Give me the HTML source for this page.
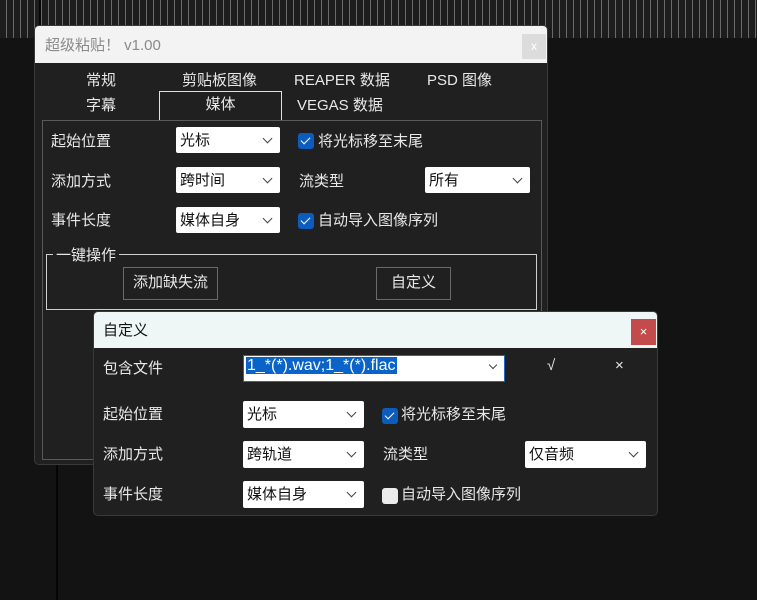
<!DOCTYPE html>
<html><head><meta charset="utf-8"><style>
*{box-sizing:border-box;margin:0;padding:0}
body{width:757px;height:600px;overflow:hidden;background:#131313;position:relative;font-family:"Liberation Sans","Noto Sans CJK SC",sans-serif;font-size:15px;color:#e8e8e8}
.a{position:absolute}
.top{left:0;top:0;width:757px;height:38px;background:#1d1d1d repeating-linear-gradient(90deg,transparent 0 6px,#6a6a6a 6px 7px)}
.vl{width:2px;background:#050505}
.win{left:34px;top:25px;width:514px;height:440px;background:#202020;border:1px solid #3a3a3a;border-radius:5px;overflow:hidden}
.tb{left:0;top:0;width:100%;height:37px;background:#f3f3f3;color:#8a8a8a;font-size:15px;padding:8px 10px}
.cb{background:#dcdcdc;color:#fff;font-size:12px;text-align:center;line-height:25px}
.t{font-size:15px;color:#e8e8e8;white-space:nowrap}
.sel{border:1px solid #e0e0e0;border-bottom:none;width:123px;height:29px;text-align:center;line-height:26px}
.panel{border:1px solid #5a5a5a}
.combo{background:#fff;color:#111;height:26px;padding:2px 4px;font-size:15px;border-radius:2px}
.combo:after{content:"";position:absolute;right:9px;top:8px;width:6px;height:6px;border-right:1px solid #444;border-bottom:1px solid #444;transform:rotate(45deg)}
.chk{width:16px;height:16px;background:#0b5cbd;border-radius:3px}
.chk:after{content:"";position:absolute;left:5px;top:2px;width:4px;height:8px;border-right:1.5px solid #fff;border-bottom:1.5px solid #fff;transform:rotate(45deg)}
.btn{border:1px solid #6a6a6a;text-align:center;line-height:30px}
.dlg{left:93px;top:311px;width:565px;height:205px;background:#202020;border:1px solid #3a3a3a;border-radius:5px;overflow:hidden}
</style></head><body>
<div class="a top"></div>
<div class="a vl" style="left:39px;top:0;height:38px"></div>
<div class="a vl" style="left:56px;top:38px;height:562px"></div>
<div class="a win">
 <div class="a tb">超级粘贴！ v1.00</div>
 <div class="a cb" style="left:487px;top:8px;width:24px;height:25px">x</div>
 <div class="a t" style="left:51px;top:43px">常规</div>
 <div class="a t" style="left:147px;top:43px">剪贴板图像</div>
 <div class="a t" style="left:259px;top:43px">REAPER 数据</div>
 <div class="a t" style="left:392px;top:43px">PSD 图像</div>
 <div class="a t" style="left:51px;top:68px">字幕</div>
 <div class="a t sel" style="left:124px;top:65px">媒体</div>
 <div class="a t" style="left:262px;top:68px">VEGAS 数据</div>
 <div class="a panel" style="left:7px;top:94px;width:500px;height:340px"></div>
 <div class="a t" style="left:16px;top:104px">起始位置</div>
 <div class="a combo" style="left:141px;top:101px;width:104px">光标</div>
 <div class="a chk" style="left:263px;top:107px"></div>
 <div class="a t" style="left:283px;top:104px">将光标移至末尾</div>
 <div class="a t" style="left:16px;top:144px">添加方式</div>
 <div class="a combo" style="left:141px;top:141px;width:104px">跨时间</div>
 <div class="a t" style="left:264px;top:144px">流类型</div>
 <div class="a combo" style="left:390px;top:141px;width:105px">所有</div>
 <div class="a t" style="left:16px;top:183px">事件长度</div>
 <div class="a combo" style="left:141px;top:181px;width:104px">媒体自身</div>
 <div class="a chk" style="left:263px;top:187px"></div>
 <div class="a t" style="left:283px;top:183px">自动导入图像序列</div>
 <div class="a" style="left:11px;top:228px;width:491px;height:56px;border:1px solid #cfcfcf"></div>
 <div class="a t" style="left:18px;top:218px;background:#202020;padding:0 3px">一键操作</div>
 <div class="a t btn" style="left:88px;top:241px;width:95px;height:33px">添加缺失流</div>
 <div class="a t btn" style="left:341px;top:241px;width:75px;height:33px">自定义</div>
</div>
<div class="a dlg">
 <div class="a" style="left:0;top:0;width:100%;height:36px;background:#eef6f6;color:#111;padding:7px 9px;font-size:15px">自定义</div>
 <div class="a" style="left:537px;top:7px;width:25px;height:26px;background:#c44b4b;color:#fff;text-align:center;line-height:25px;font-size:13px">×</div>
 <div class="a t" style="left:9px;top:45px">包含文件</div>
 <div class="a" style="left:149px;top:43px;width:262px;height:27px;background:#fff;border:1px solid #1d66c8;padding:1px 2px"><span style="background:#0a63c9;color:#fff;font-size:16px;padding:0 1px">1_*(*).wav;1_*(*).flac</span></div>
 <div class="a" style="left:396px;top:50px;width:6px;height:6px;border-right:1px solid #444;border-bottom:1px solid #444;transform:rotate(45deg)"></div>
 <div class="a t" style="left:453px;top:45px">√</div>
 <div class="a t" style="left:521px;top:45px">×</div>
 <div class="a t" style="left:9px;top:91px">起始位置</div>
 <div class="a combo" style="left:149px;top:89px;width:121px;height:27px">光标</div>
 <div class="a chk" style="left:288px;top:96px"></div>
 <div class="a t" style="left:307px;top:91px">将光标移至末尾</div>
 <div class="a t" style="left:9px;top:131px">添加方式</div>
 <div class="a combo" style="left:149px;top:129px;width:121px;height:27px">跨轨道</div>
 <div class="a t" style="left:289px;top:131px">流类型</div>
 <div class="a combo" style="left:431px;top:129px;width:121px;height:27px">仅音频</div>
 <div class="a t" style="left:9px;top:171px">事件长度</div>
 <div class="a combo" style="left:149px;top:169px;width:121px;height:27px">媒体自身</div>
 <div class="a" style="left:288px;top:176px;width:16px;height:16px;background:#ececec;border-radius:3px"></div>
 <div class="a t" style="left:307px;top:171px">自动导入图像序列</div>
</div>
</body></html>
